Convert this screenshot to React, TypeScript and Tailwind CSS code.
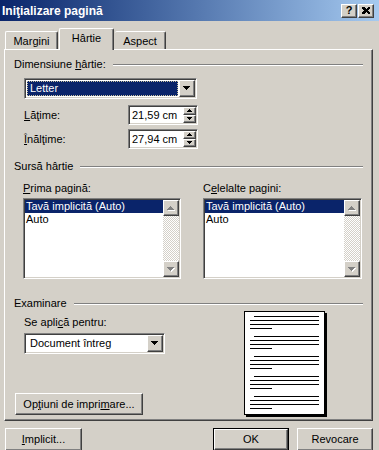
import React from 'react';

const raised =
  'border border-t-white border-l-white border-r-[#404040] border-b-[#404040] shadow-[inset_-1px_-1px_0_#808080] bg-[#d4d0c8]';
const sunken =
  'border border-t-[#808080] border-l-[#808080] border-r-white border-b-white shadow-[inset_1px_1px_0_#404040,inset_-1px_-1px_0_#d4d0c8]';

function Tri({ up = false, w = 7, h = 4, disabled = false }: { up?: boolean; w?: number; h?: number; disabled?: boolean }) {
  const pts = up ? `0,${h} ${w},${h} ${w / 2},0` : `0,0 ${w},0 ${w / 2},${h}`;
  return (
    <svg width={w + 1} height={h + 1} shapeRendering="crispEdges">
      {disabled && <polygon points={pts} fill="#fff" transform="translate(1,1)" />}
      <polygon points={pts} fill={disabled ? '#808080' : '#000'} />
    </svg>
  );
}

function Group({ label }: { label: React.ReactNode }) {
  return (
    <div className="flex items-center h-[13px] leading-[13px]">
      <span>{label}</span>
      <div className="flex-1 ml-[7px] h-[2px] border-y border-t-[#808080] border-b-white" />
    </div>
  );
}

function Combo({ text, selected, className }: { text: string; selected?: boolean; className: string }) {
  return (
    <div className={`${sunken} ${className} h-[21px] bg-white flex p-[1px]`}>
      <div className="flex-1 flex p-[1px]">
        {selected ? (
          <div className="flex-1 bg-[#0a246a] text-white pl-[2px] leading-[13px] border border-dotted border-[#c9c2a0]">
            {text}
          </div>
        ) : (
          <div className="flex-1 pl-[3px] leading-[15px]">{text}</div>
        )}
      </div>
      <div className={`${raised} w-[16px] flex items-center justify-center`}>
        <Tri />
      </div>
    </div>
  );
}

function Spinner({ value }: { value: string }) {
  return (
    <div className={`${sunken} w-[70px] h-[20px] bg-white flex p-[1px]`}>
      <div className="flex-1 pl-[2px] leading-[16px]">{value}</div>
      <div className="w-[13px] flex flex-col">
        <div className={`${raised} flex-1 flex items-center justify-center`}>
          <Tri up w={5} h={3} />
        </div>
        <div className={`${raised} flex-1 flex items-center justify-center`}>
          <Tri w={5} h={3} />
        </div>
      </div>
    </div>
  );
}

function ListBox() {
  return (
    <div className={`${sunken} h-[81px] bg-white flex p-[1px]`}>
      <div className="flex-1 leading-[13px]">
        <div className="bg-[#0a246a] text-white pl-[1px] h-[13px]">Tavă implicită (Auto)</div>
        <div className="pl-[1px] h-[13px]">Auto</div>
      </div>
      <div className="w-[16px] flex flex-col bg-[repeating-conic-gradient(#d4d0c8_0%_25%,#ffffff_0%_50%)] bg-[length:2px_2px]">
        <div className={`${raised} h-[16px] flex items-center justify-center`}>
          <Tri up disabled />
        </div>
        <div className="flex-1" />
        <div className={`${raised} h-[16px] flex items-center justify-center`}>
          <Tri disabled />
        </div>
      </div>
    </div>
  );
}

function PagePreview() {
  const groups = [4, 24, 44, 64, 84];
  return (
    <div className="w-[81px] h-[104px] border border-black bg-white shadow-[2px_2px_0_#000]">
      <svg width="79" height="102" shapeRendering="crispEdges">
        {groups.map((y) => (
          <g key={y} stroke="#000" strokeWidth="1">
            <line x1="9" y1={y + 0.5} x2="74" y2={y + 0.5} />
            <line x1="5" y1={y + 4.5} x2="74" y2={y + 4.5} />
            <line x1="5" y1={y + 8.5} x2="74" y2={y + 8.5} />
            <line x1="5" y1={y + 12.5} x2="27" y2={y + 12.5} />
          </g>
        ))}
      </svg>
    </div>
  );
}

export default function App() {
  return (
    <div className="w-[379px] h-[450px] bg-[#d4d0c8] font-['Liberation_Sans',Arial,sans-serif] text-[11px] text-black overflow-hidden">
      {/* title bar */}
      <div className="h-[21px] flex items-center justify-between bg-linear-to-r from-[#0a246a] to-[#a6caf0] pl-[2px] pr-[5px]">
        <span className="text-white font-bold text-[12px]">Iniţializare pagină</span>
        <div className="flex gap-[1px]">
          <div className={`${raised} w-[16px] h-[14px] flex items-center justify-center font-bold text-[11px] leading-none`}>?</div>
          <div className={`${raised} w-[16px] h-[14px] flex items-center justify-center`}>
            <svg width="8" height="7" shapeRendering="crispEdges">
              <path d="M0 0h2l2 2 2-2h2v1l-2 2.5 2 2.5v1h-2l-2-2-2 2h-2v-1l2-2.5-2-2.5z" fill="#000" />
            </svg>
          </div>
        </div>
      </div>

      {/* tabs */}
      <div className="mt-[7px] h-[21px] flex items-end pl-[5px] relative z-10">
        <div className="w-[53px] h-[18px] border-t border-l border-r border-t-white border-l-white border-r-[#404040] shadow-[inset_-1px_0_0_#808080] rounded-t-[2px] flex items-center justify-center pt-[1px]">
          Margini
        </div>
        <div className="ml-[1px] w-[55px] h-[22px] relative top-[1px] bg-[#d4d0c8] border-t border-l border-r border-t-white border-l-white border-r-[#404040] shadow-[inset_-1px_0_0_#808080] rounded-t-[2px] flex items-center justify-center pb-[3px]">
          Hârtie
        </div>
        <div className="ml-[1px] w-[51px] h-[18px] border-t border-r border-t-white border-r-[#404040] shadow-[inset_-1px_0_0_#808080] rounded-t-[2px] flex items-center justify-center pt-[1px]">
          Aspect
        </div>
      </div>

      {/* tab panel */}
      <div className={`${raised} ml-[4px] w-[369px] h-[372px] flex flex-col pl-[9px] pr-[9px]`}>
        <div className="mt-[8px]">
          <Group label={<>Dimensiune <span className="underline">h</span>ârtie:</>} />
        </div>
        <Combo text="Letter" selected className="mt-[7px] ml-[10px] w-[173px]" />
        <div className="mt-[6px] ml-[10px] flex items-center">
          <span className="w-[104px]"><span className="underline">L</span>ăţime:</span>
          <Spinner value="21,59 cm" />
        </div>
        <div className="mt-[4px] ml-[10px] flex items-center">
          <span className="w-[104px]"><span className="underline">Î</span>nălţime:</span>
          <Spinner value="27,94 cm" />
        </div>

        <div className="mt-[11px]">
          <Group label="Sursă hârtie" />
        </div>
        <div className="mt-[9px] ml-[9px] flex gap-[22px]">
          <div className="w-[158px] flex flex-col">
            <span className="h-[13px] leading-[13px]"><span className="underline">P</span>rima pagină:</span>
            <div className="mt-[3px]"><ListBox /></div>
          </div>
          <div className="w-[159px] flex flex-col">
            <span className="h-[13px] leading-[13px]">C<span className="underline">e</span>lelalte pagini:</span>
            <div className="mt-[3px]"><ListBox /></div>
          </div>
        </div>

        <div className="mt-[18px]">
          <Group label="Examinare" />
        </div>
        <div className="flex">
          <div className="w-[230px] flex flex-col">
            <span className="mt-[6px] ml-[10px] h-[13px] leading-[13px]">Se apli<span className="underline">c</span>ă pentru:</span>
            <Combo text="Document întreg" className="mt-[4px] ml-[10px] w-[141px]" />
            <div className={`${raised} mt-[39px] ml-[1px] w-[128px] h-[22px] flex items-center justify-center`}>
              <span>
                Op<span className="underline">ţ</span>iuni de impri<span className="underline">m</span>are...
              </span>
            </div>
          </div>
          <div className="mt-[1px]">
            <PagePreview />
          </div>
        </div>
      </div>

      {/* bottom buttons */}
      <div className="mt-[7px] flex justify-between pl-[5px] pr-[6px]">
        <div className={`${raised} w-[77px] h-[23px] flex items-center justify-center`}>
          <span><span className="underline">I</span>mplicit...</span>
        </div>
        <div className="flex gap-[8px]">
          <div className="w-[76px] h-[23px] border border-black">
            <div className={`${raised} w-full h-full flex items-center justify-center`}>OK</div>
          </div>
          <div className={`${raised} w-[76px] h-[23px] flex items-center justify-center`}>Revocare</div>
        </div>
      </div>
    </div>
  );
}
